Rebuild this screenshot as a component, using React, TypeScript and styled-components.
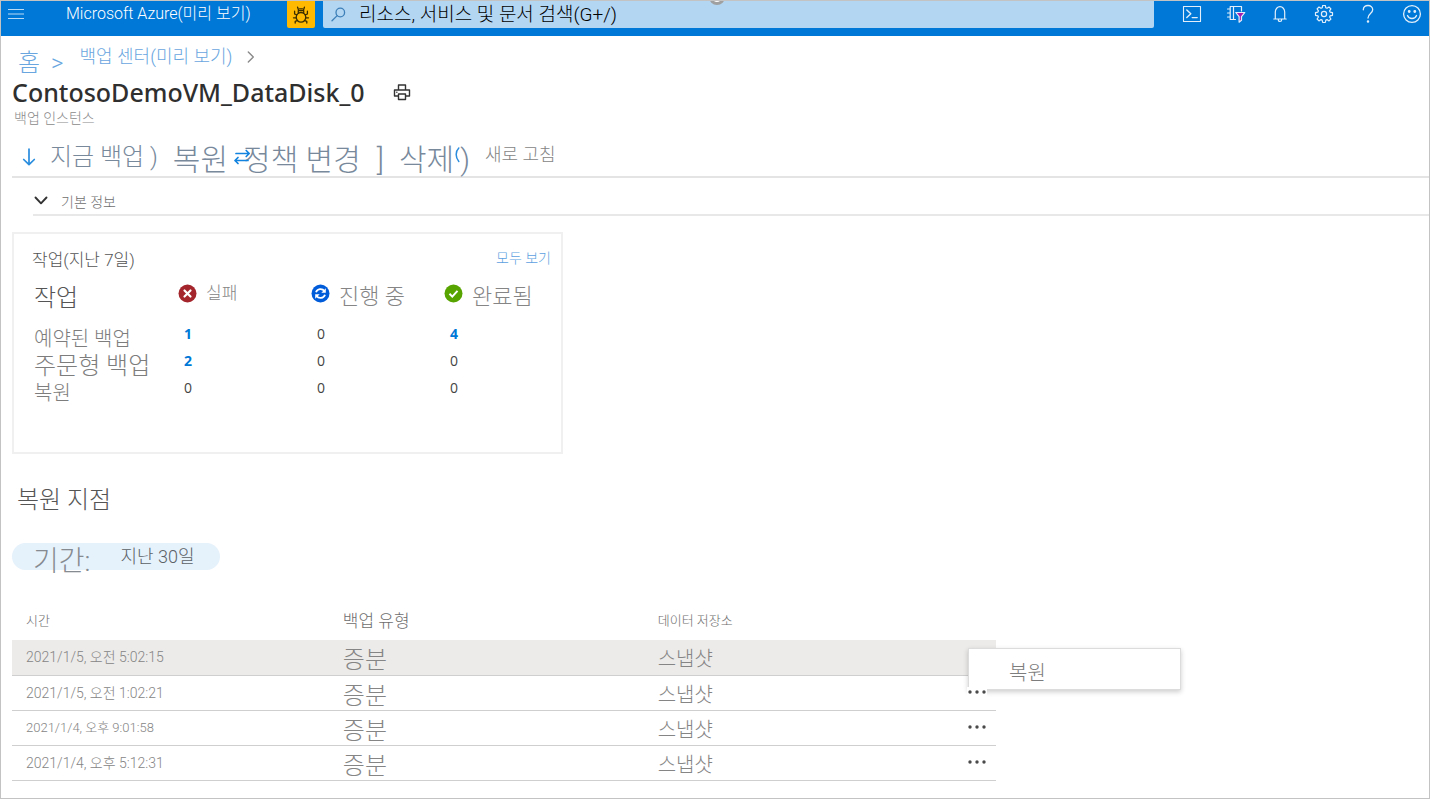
import React from "react";
import styled, { createGlobalStyle } from "styled-components";

const GlobalStyle = createGlobalStyle`
  *, *::before, *::after { box-sizing: border-box; }
  body {
    margin: 0;
    background: #fff;
    color: #6e6e6e;
    font-family: Roboto, "Noto Sans CJK KR", sans-serif;
    font-size: 14px;
    font-weight: 300;
  }
  button, input { font: inherit; color: inherit; }
  button { border: 0; padding: 0; background: none; cursor: pointer; }
  a { color: inherit; text-decoration: none; }
  h1, h2, h3, p { margin: 0; font-weight: inherit; }
  svg { display: block; flex: none; }
`;

const Frame = styled.div`
  position: relative;
  min-height: 100vh;
  border: 1px solid #c3c3c3;
  overflow: hidden;
`;

const TopBar = styled.header`
  display: flex;
  align-items: flex-start;
  height: 35px;
  background: #0078d7;
  color: #fff;
`;

const MenuButton = styled.button`
  display: grid;
  place-items: center;
  width: 30px;
  height: 26px;
`;

const Brand = styled.a`
  width: 221px;
  margin-left: 35px;
  font-size: 16px;
  line-height: 26px;
  white-space: nowrap;
`;

const BugButton = styled.button`
  display: grid;
  place-items: center;
  width: 28px;
  height: 27px;
  border-radius: 0 0 2px 2px;
  background: #ffb900;
`;

const SearchBox = styled.label`
  display: flex;
  flex: 1;
  align-items: center;
  gap: 13px;
  min-width: 0;
  height: 27px;
  margin-left: 8px;
  padding-left: 8px;
  border-radius: 0 0 2px 2px;
  background: #b3d6f2;
`;

const SearchInput = styled.input`
  flex: 1;
  min-width: 0;
  height: 27px;
  padding: 0;
  border: 0;
  outline: 0;
  background: none;
  color: #000;
  font-size: 19px;
  &::placeholder { color: #000; opacity: 1; }
`;

const HeaderActions = styled.nav`
  display: flex;
  gap: 10px;
  margin-left: 21px;
  color: #e2effa;
`;

const HeaderAction = styled.button`
  display: grid;
  place-items: center;
  width: 34px;
  height: 26px;
`;

const DragHandle = styled.span`
  position: absolute;
  top: -12px;
  left: 50%;
  width: 16px;
  height: 16px;
  margin-left: -6px;
  border: 3px solid #a0a0a0;
  border-radius: 50%;
  background: #fff;
`;

const Content = styled.main`
  padding-left: 11px;
`;

const Breadcrumb = styled.nav`
  display: flex;
  align-items: flex-start;
  padding-left: 6px;
  height: 41px;
  color: #69a6e0;
  font-size: 18px;
  line-height: 42px;
`;

const HomeLink = styled.a`
  margin-right: 11px;
  font-size: 24px;
  line-height: 54px;
`;

const CrumbArrow = styled.span`
  margin-right: 16px;
  font-size: 24px;
  line-height: 54px;
`;

const CrumbChevron = styled.span`
  display: grid;
  align-items: center;
  height: 41px;
  margin-left: 15px;
`;

const TitleRow = styled.div`
  display: flex;
  align-items: center;
  gap: 28px;
  height: 30px;
`;

const Title = styled.h1`
  color: #2f2f2f;
  font-family: "Noto Sans", "Noto Sans CJK KR", sans-serif;
  font-size: 25px;
  font-weight: 500;
  line-height: 30px;
`;

const Subtitle = styled.p`
  padding-left: 2px;
  color: #8a8a8a;
  line-height: 22px;
`;

const Toolbar = styled.div`
  display: flex;
  align-items: center;
  height: 49px;
  padding: 14px 0 0 10px;
  border-bottom: 2px solid #e4e4e4;
  color: #78899c;
  white-space: nowrap;
`;

const Command = styled.button<{ $size: number; $raise?: number; $inner?: number }>`
  position: relative;
  display: flex;
  align-items: center;
  gap: ${(p) => p.$inner || 14}px;
  margin-right: 15px;
  padding-bottom: ${(p) => p.$raise || 0}px;
  font-size: ${(p) => p.$size}px;
  line-height: 34px;
`;

const SwapIcon = styled.span`
  position: absolute;
  top: 5px;
  left: -10px;
`;

const RefreshCommand = styled(Command)`
  color: #858585;
`;

const RefreshArc = styled.span`
  position: absolute;
  top: 4px;
  right: 10px;
`;

const Essentials = styled.button`
  display: flex;
  align-items: center;
  gap: 13px;
  width: calc(100% - 21px);
  height: 38px;
  margin-left: 21px;
  padding: 9px 0 0 1px;
  border-bottom: 2px solid #e8e8e8;
`;

const JobsCard = styled.section`
  max-width: 551px;
  min-height: 222px;
  margin-top: 16px;
  padding: 14px 10px 0 18px;
  border: 2px solid #f0f0f0;
`;

const CardHeader = styled.div`
  display: flex;
  align-items: flex-start;
  justify-content: space-between;
  line-height: 24px;
`;

const CardTitle = styled.h2`
  font-size: 17px;
  color: #555;
`;

const BlueLink = styled.a`
  color: #5c9fe0;
  line-height: 21px;
`;

const JobsTable = styled.table`
  width: 100%;
  margin-top: 6px;
  border-collapse: collapse;
  table-layout: fixed;
`;

const JobsHead = styled.th<{ $width: number }>`
  width: ${(p) => p.$width}px;
  height: 48px;
  padding: 0;
  text-align: left;
  font-size: 24px;
  font-weight: 300;
  line-height: 40px;
  vertical-align: top;
  white-space: nowrap;
  color: #555;
  &:first-child { padding-left: 2px; }
`;

const Status = styled.span<{ $size: number; $line: number }>`
  display: flex;
  align-items: flex-start;
  gap: 9px;
  color: #858585;
  font-size: ${(p) => p.$size}px;
  line-height: ${(p) => p.$line}px;
  svg { margin-top: 6px; }
`;

const JobsName = styled.th<{ $size: number }>`
  height: 27px;
  padding: 0 0 0 2px;
  color: #7d7d7d;
  text-align: left;
  font-size: ${(p) => p.$size}px;
  font-weight: 300;
  line-height: 27px;
  white-space: nowrap;
`;

const JobsCount = styled.td`
  padding: 0 0 0 6px;
  color: #444;
  font-family: "Open Sans", sans-serif;
  font-size: 14px;
  font-weight: 400;
  line-height: 16px;
  vertical-align: top;
  a { color: #0078d7; font-weight: 700; }
`;

const SectionTitle = styled.h2`
  padding: 29px 0 0 5px;
  color: #555;
  font-size: 24px;
  line-height: 34px;
`;

const PeriodFilter = styled.button`
  display: flex;
  align-items: flex-start;
  gap: 30px;
  height: 27px;
  margin: 26px 0 30px;
  padding: 0 26px 0 21px;
  border-radius: 14px;
  background: #e5f1fb;
  white-space: nowrap;
`;

const PeriodLabel = styled.span`
  color: #858b90;
  font-size: 28px;
  line-height: 37px;
`;

const PeriodValue = styled.span`
  color: #5b6167;
  font-size: 18px;
  line-height: 28px;
`;

const PointsArea = styled.div`
  position: relative;
  max-width: 984px;
`;

const PointsTable = styled.table`
  width: 100%;
  border-collapse: collapse;
  table-layout: fixed;
`;

const PointsHead = styled.th<{ $size: number; $width?: string }>`
  width: ${(p) => p.$width || "auto"};
  height: 40px;
  padding: 0 0 2px 14px;
  text-align: left;
  font-size: ${(p) => p.$size}px;
  font-weight: 300;
`;

const PointRow = styled.tr<{ $selected?: boolean }>`
  height: 35px;
  border-bottom: 1px solid #cfcfcf;
  background: ${(p) => (p.$selected ? "#ecebe9" : "transparent")};
`;

const PointCell = styled.td<{ $size: number; $drop?: number }>`
  padding: ${(p) => p.$drop || 0}px 0 0 14px;
  color: #858585;
  font-size: ${(p) => p.$size}px;
  line-height: 26px;
  white-space: nowrap;
`;

const MoreCell = styled.td`
  padding: 0 9px 2px 0;
`;

const MoreButton = styled.button`
  position: relative;
  z-index: 2;
  display: grid;
  place-items: center;
  width: 20px;
  height: 10px;
  margin-left: auto;
  background: #fff;
`;

const ContextMenu = styled.div`
  position: absolute;
  z-index: 1;
  top: 48px;
  left: calc(100% - 28px);
  width: 213px;
  height: 42px;
  border: 1px solid #dcdcdc;
  background: #fff;
  box-shadow: 0 2px 5px rgba(0, 0, 0, 0.2);
`;

const MenuItem = styled.button`
  width: 100%;
  height: 40px;
  padding: 4px 0 0 40px;
  color: #7d7d7d;
  text-align: left;
  font-size: 20px;
`;

const line = {
  fill: "none",
  stroke: "currentColor",
  strokeLinecap: "round" as const,
  strokeLinejoin: "round" as const,
};

const Hamburger = () => (
  <svg width="16" height="12" viewBox="0 0 16 12" stroke="#b9daf5" strokeWidth="1.2">
    <path d="M0 1.5h16M0 6h16M0 10.5h16" />
  </svg>
);

const Bug = () => (
  <svg width="18" height="18" viewBox="0 0 18 18" {...line} stroke="#3a2d00" strokeWidth="1.3">
    <circle cx="9" cy="11.300" r="4.800" />
    <path d="M6.300 6.800V4.600h5.400v2.200M6.600 4.400L5.600 1.200M11.400 4.400l1-3.200M7.500 2.800h3M4.900 8.800L2.600 8V5.200M13.100 8.800l2.300-.8V5.200M4 11.800H1.500M14 11.800h2.500M5.200 14.600l-2 .8V17M12.800 14.600l2 .8V17" />
  </svg>
);

const Magnifier = () => (
  <svg width="15" height="15" viewBox="0 0 15 15" {...line} stroke="#3d7fb8" strokeWidth="1.3">
    <circle cx="9.300" cy="5.500" r="4.300" />
    <path d="M6.200 8.600L1 13.800" />
  </svg>
);

const Shell = () => (
  <svg width="20" height="18" viewBox="0 0 20 18" {...line} strokeWidth="1.1">
    <rect x="1.500" y="1.500" width="17" height="15" />
    <path d="M4.800 5l4 3.700-4 3.700M10.200 12.600h5" strokeWidth="1.400" />
  </svg>
);

const Directory = () => (
  <svg width="20" height="20" viewBox="0 0 20 20" {...line} strokeWidth="1.200">
    <path d="M9.500 15.500H4.200V2.500h11.300V7M4.200 5H1.500M4.200 9H1.500M4.200 13H1.500M7.500 2.500v13" />
    <path d="M9.800 8.500h9l-3.300 4.200v3.600l-2.400 1.900v-5.500z" fill="#a21caf" />
  </svg>
);

const Bell = () => (
  <svg width="16" height="18" viewBox="0 0 16 18" {...line} strokeWidth="1.2">
    <path d="M1.800 14h12.400M3.300 13.800V7a4.700 5.300 0 0 1 9.400 0v6.800M6.300 14.500a1.700 2 0 0 0 3.400 0" />
  </svg>
);

const Gear = () => (
  <svg width="20" height="20" viewBox="0 0 20 20" {...line} strokeWidth="1.2">
    <path d="M8.700 1.500h2.600l.5 2.300 1.200.5 2-1.300 1.900 1.900-1.300 2 .5 1.200 2.400.5v2.700l-2.400.5-.5 1.200 1.300 2-1.900 1.900-2-1.300-1.200.5-.5 2.400H8.700l-.5-2.400-1.200-.5-2 1.300-1.900-1.900 1.300-2-.5-1.200-2.400-.5V8.600l2.400-.5.5-1.200-1.300-2L5 3l2 1.300 1.200-.5z" />
    <circle cx="10" cy="10" r="2.600" />
  </svg>
);

const Help = () => (
  <svg width="14" height="20" viewBox="0 0 14 20" {...line} strokeWidth="1.300">
    <path d="M2.300 5.800c0-2.800 2-4.300 4.700-4.300s4.700 1.600 4.700 4.200c0 3.700-4.700 4-4.700 8.300" />
    <circle cx="7" cy="17.500" r=".6" fill="currentColor" />
  </svg>
);

const Smile = () => (
  <svg width="20" height="20" viewBox="0 0 20 20" {...line} strokeWidth="1.300">
    <circle cx="10" cy="10" r="8.400" />
    <path d="M5.500 11.500c1.500 4 7.500 4 9 0" />
    <circle cx="7.200" cy="7.500" r=".8" fill="currentColor" />
    <circle cx="12.800" cy="7.500" r=".8" fill="currentColor" />
  </svg>
);

const Chevron = () => (
  <svg width="8" height="12" viewBox="0 0 8 12" {...line} stroke="#8a8a8a" strokeWidth="1.400">
    <path d="M1.300 1l5 5-5 5" />
  </svg>
);

const Printer = () => (
  <svg width="18" height="18" viewBox="0 0 18 18" {...line} stroke="#333" strokeWidth="1.400">
    <path d="M5.500 7V2h7v5M5 13H1.500V7h15v6H13M5.500 11h7v5.500h-7zM3.800 9.200h.1" />
  </svg>
);

const DownArrow = () => (
  <svg width="14" height="18" viewBox="0 0 14 18" {...line} stroke="#2a8dde" strokeWidth="1.700">
    <path d="M7 1v15.500M1.700 11.500L7 16.700l5.300-5.200" />
  </svg>
);

const Swap = () => (
  <svg width="18" height="18" viewBox="0 0 18 18" {...line} stroke="#1284e0" strokeWidth="1.700">
    <path d="M3 5.500h13M13.200 2.500l3 3-3 3M15 12.500H2M5 9.500l-3 3 3 3" />
  </svg>
);

const Arc = () => (
  <svg width="5" height="16" viewBox="0 0 5 16" {...line} stroke="#2a8dde" strokeWidth="1.500">
    <path d="M3.800 1C.3 4.500.3 10.500 3.800 14.500" />
  </svg>
);

const Expand = () => (
  <svg width="14" height="9" viewBox="0 0 14 9" {...line} stroke="#333" strokeWidth="1.900">
    <path d="M1.500 1.500L7 7.300l5.500-5.800" />
  </svg>
);

const Failed = () => (
  <svg width="19" height="19" viewBox="0 0 19 19">
    <circle cx="9.500" cy="9.500" r="9" fill="#a4262c" />
    <path d="M6.500 6.500l6 6M12.500 6.500l-6 6" stroke="#fff" strokeWidth="2.200" strokeLinecap="round" />
  </svg>
);

const InProgress = () => (
  <svg width="19" height="19" viewBox="0 0 19 19">
    <circle cx="9.500" cy="9.500" r="9" fill="#015cda" />
    <g fill="none" stroke="#fff" strokeWidth="1.800">
      <path d="M5 8.300c1.300-3.800 6.300-4.300 8.400-1.200M14 10.700c-1.300 3.800-6.300 4.300-8.400 1.200" />
    </g>
    <path d="M14.800 4.300v4.500h-4.500zM4.200 14.700v-4.500h4.500z" fill="#fff" />
  </svg>
);

const Completed = () => (
  <svg width="19" height="19" viewBox="0 0 19 19">
    <circle cx="9.500" cy="9.500" r="9" fill="#57a300" />
    <path d="M5.500 9.700l2.800 2.900 5.200-5.700" fill="none" stroke="#fff" strokeWidth="2" />
  </svg>
);

const Dots = () => (
  <svg width="18" height="4" viewBox="0 0 18 4" fill="#4a4a4a">
    <circle cx="2" cy="2" r="1.700" />
    <circle cx="9" cy="2" r="1.700" />
    <circle cx="16" cy="2" r="1.700" />
  </svg>
);

const headerActions = [
  { label: "Cloud Shell", Icon: Shell },
  { label: "디렉터리", Icon: Directory },
  { label: "알림", Icon: Bell },
  { label: "설정", Icon: Gear },
  { label: "도움말", Icon: Help },
  { label: "피드백", Icon: Smile },
];

const jobs = [
  { name: "예약된 백업", size: 20, counts: [1, 0, 4] },
  { name: "주문형 백업", size: 24, counts: [2, 0, 0] },
  { name: "복원", size: 20, counts: [0, 0, 0] },
];

const points = [
  { time: "2021/1/5, 오전 5:02:15", size: 14 },
  { time: "2021/1/5, 오전 1:02:21", size: 14 },
  { time: "2021/1/4, 오후 9:01:58", size: 13 },
  { time: "2021/1/4, 오후 5:12:31", size: 14 },
];

export default function App() {
  return (
    <Frame>
      <GlobalStyle />
      <TopBar>
        <MenuButton aria-label="메뉴"><Hamburger /></MenuButton>
        <Brand href="#">Microsoft Azure(미리 보기)</Brand>
        <BugButton aria-label="버그"><Bug /></BugButton>
        <SearchBox>
          <Magnifier />
          <SearchInput aria-label="검색" placeholder="리소스, 서비스 및 문서 검색(G+/)" />
        </SearchBox>
        <HeaderActions>
          {headerActions.map(({ label, Icon }) => (
            <HeaderAction key={label} aria-label={label}><Icon /></HeaderAction>
          ))}
        </HeaderActions>
      </TopBar>
      <DragHandle />

      <Content>
        <Breadcrumb>
          <HomeLink href="#">홈</HomeLink>
          <CrumbArrow>&gt;</CrumbArrow>
          <a href="#">백업 센터(미리 보기)</a>
          <CrumbChevron><Chevron /></CrumbChevron>
        </Breadcrumb>
        <TitleRow>
          <Title>ContosoDemoVM_DataDisk_0</Title>
          <button aria-label="인쇄"><Printer /></button>
        </TitleRow>
        <Subtitle>백업 인스턴스</Subtitle>

        <Toolbar>
          <Command $size={24} $raise={5}><DownArrow />지금 백업 )</Command>
          <Command $size={30}>복원</Command>
          <Command $size={30} $inner={16}><SwapIcon><Swap /></SwapIcon>정책 변경 <span>]</span></Command>
          <Command $size={30} $inner={6}>삭제<span>)</span><RefreshArc><Arc /></RefreshArc></Command>
          <RefreshCommand $size={18} $raise={10}>새로 고침</RefreshCommand>
        </Toolbar>

        <Essentials><Expand />기본 정보</Essentials>

        <JobsCard>
          <CardHeader>
            <CardTitle>작업(지난 7일)</CardTitle>
            <BlueLink href="#">모두 보기</BlueLink>
          </CardHeader>
          <JobsTable>
            <thead>
              <tr>
                <JobsHead $width={146}>작업</JobsHead>
                <JobsHead $width={133}><Status $size={17} $line={30}><Failed />실패</Status></JobsHead>
                <JobsHead $width={133}><Status $size={22} $line={38}><InProgress />진행 중</Status></JobsHead>
                <JobsHead $width={108}><Status $size={22} $line={38}><Completed />완료됨</Status></JobsHead>
              </tr>
            </thead>
            <tbody>
              {jobs.map((job) => (
                <tr key={job.name}>
                  <JobsName scope="row" $size={job.size}>{job.name}</JobsName>
                  {job.counts.map((count, i) => (
                    <JobsCount key={i}>{count > 0 ? <a href="#">{count}</a> : count}</JobsCount>
                  ))}
                </tr>
              ))}
            </tbody>
          </JobsTable>
        </JobsCard>

        <SectionTitle>복원 지점</SectionTitle>
        <PeriodFilter>
          <PeriodLabel>기간:</PeriodLabel>
          <PeriodValue>지난 30일</PeriodValue>
        </PeriodFilter>

        <PointsArea>
          <PointsTable>
            <thead>
              <tr>
                <PointsHead $size={13} $width="32.2%">시간</PointsHead>
                <PointsHead $size={17} $width="32%">백업 유형</PointsHead>
                <PointsHead $size={13}>데이터 저장소</PointsHead>
                <PointsHead $size={13} $width="60px" aria-label="작업" />
              </tr>
            </thead>
            <tbody>
              {points.map((point, i) => (
                <PointRow key={point.time} $selected={i === 0}>
                  <PointCell $size={point.size}>{point.time}</PointCell>
                  <PointCell $size={24} $drop={6}>증분</PointCell>
                  <PointCell $size={20} $drop={4}>스냅샷</PointCell>
                  <MoreCell>
                    {i > 0 && <MoreButton aria-label="추가 작업"><Dots /></MoreButton>}
                  </MoreCell>
                </PointRow>
              ))}
            </tbody>
          </PointsTable>
          <ContextMenu role="menu">
            <MenuItem role="menuitem">복원</MenuItem>
          </ContextMenu>
        </PointsArea>
      </Content>
    </Frame>
  );
}
